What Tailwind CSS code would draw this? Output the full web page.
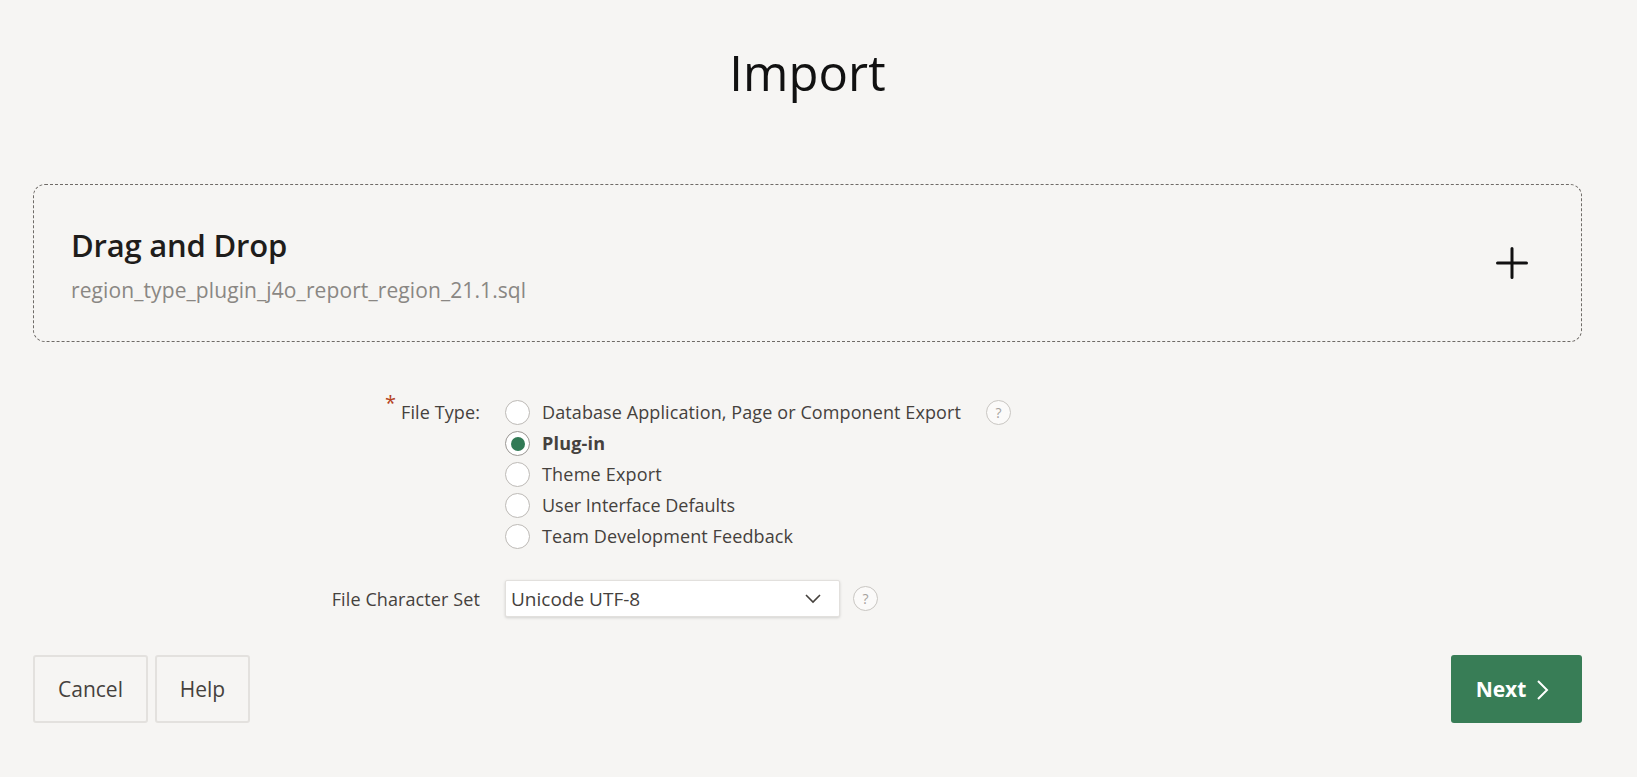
<!DOCTYPE html>
<html lang="en">
<head>
    <meta charset="UTF-8">
    <meta name="viewport" content="width=device-width, initial-scale=1.0">
    <title>Import</title>
    <script src="https://cdn.jsdelivr.net/npm/@tailwindcss/browser@4"></script>
</head>
<body class="h-screen overflow-hidden bg-[#f6f5f3] font-['Open_Sans',sans-serif] text-[#45413d]">

    <div class="w-[1549px] ml-[33px]">
        <h1 class="h-[184px] pt-[38px] text-center text-[49px] leading-[68px] font-medium text-[#111] tracking-[0.1px]">Import</h1>

        <!-- Drop zone -->
        <div class="h-[158px] flex items-center justify-between pl-[37px] pr-[53px] border border-dashed border-[#6f6b67] rounded-[12px]">
            <div class="pt-[2px]">
                <h2 class="text-[31px] leading-[40px] font-semibold text-[#1f1d1b] -tracking-[0.2px]">Drag and Drop</h2>
                <p class="mt-[11px] text-[21px] leading-[28px] text-[#8a8783] tracking-[0.1px]">region_type_plugin_j4o_report_region_21.1.sql</p>
            </div>
            <svg class="w-[32px] h-[32px]" viewBox="0 0 32 32" fill="none" stroke="#111" stroke-width="3" stroke-linecap="round"><path d="M16 1.5v29M1.5 16h29"/></svg>
        </div>

        <!-- Form -->
        <div class="mt-[55px] grid grid-cols-[447px_1fr] gap-x-[25px]">
            <div class="h-[31px] flex justify-end items-center text-[18px] tracking-[0.1px]">
                <span class="text-[#b5421c] text-[20px] leading-none mb-[20px] mr-[5px]">*</span>File Type:
            </div>
            <div class="flex flex-col">
                <label class="h-[31px] flex items-center">
                    <span class="w-[25px] h-[25px] rounded-full bg-white border border-[#bdbab6]"></span>
                    <span class="ml-[12px] w-[438px] text-[18px] tracking-[0.1px]">Database Application, Page or Component Export</span>
                    <span class="w-[25px] h-[25px] ml-[6px] flex items-center justify-center rounded-full bg-white/50 border border-[#c9c6c2] text-[14px] text-[#a5a29e]">?</span>
                </label>
                <label class="h-[31px] flex items-center">
                    <span class="w-[25px] h-[25px] flex items-center justify-center rounded-full bg-white border border-[#9a9793]"><span class="w-[14px] h-[14px] rounded-full bg-[#317a55]"></span></span>
                    <span class="ml-[12px] text-[18px] font-bold tracking-[0.2px]">Plug-in</span>
                </label>
                <label class="h-[31px] flex items-center">
                    <span class="w-[25px] h-[25px] rounded-full bg-white border border-[#bdbab6]"></span>
                    <span class="ml-[12px] text-[18px] tracking-[0.2px]">Theme Export</span>
                </label>
                <label class="h-[31px] flex items-center">
                    <span class="w-[25px] h-[25px] rounded-full bg-white border border-[#bdbab6]"></span>
                    <span class="ml-[12px] text-[18px]">User Interface Defaults</span>
                </label>
                <label class="h-[31px] flex items-center">
                    <span class="w-[25px] h-[25px] rounded-full bg-white border border-[#bdbab6]"></span>
                    <span class="ml-[12px] text-[18px] tracking-[0.1px]">Team Development Feedback</span>
                </label>
            </div>

            <div class="mt-[28px] h-[37px] pt-[1px] flex justify-end items-center text-[18px] tracking-[0.1px]">File Character Set</div>
            <div class="mt-[28px] flex items-center">
                <div class="w-[335px] h-[37px] pt-[1px] flex items-center justify-between pl-[5px] pr-[17px] bg-white border border-[#e2e0dd] rounded-[2px] shadow-[0_1px_3px_rgba(0,0,0,0.15)] text-[19px]">
                    Unicode UTF-8
                    <svg class="w-[18px] h-[10px]" viewBox="0 0 18 10" fill="none" stroke="#45413d" stroke-width="1.6"><path d="M2 1l7 7 7-7"/></svg>
                </div>
                <span class="w-[25px] h-[25px] ml-[13px] flex items-center justify-center rounded-full bg-white/50 border border-[#c9c6c2] text-[14px] text-[#a5a29e]">?</span>
            </div>
        </div>

        <!-- Buttons -->
        <div class="mt-[38px] flex justify-between">
            <div class="flex gap-[7px]">
                <button class="w-[115px] h-[68px] pt-[1px] border-2 border-[#e3e1de] rounded-[3px] text-[21px] text-[#45413d]">Cancel</button>
                <button class="w-[95px] h-[68px] pt-[1px] border-2 border-[#e3e1de] rounded-[3px] text-[21px] text-[#45413d]">Help</button>
            </div>
            <button class="w-[131px] h-[68px] pt-[1px] pr-[8px] flex items-center justify-center gap-[10px] bg-[#387d56] rounded-[3px] text-[21px] font-bold text-white">
                Next
                <svg class="w-[13px] h-[20px]" viewBox="0 0 13 20" fill="none" stroke="#fff" stroke-width="2"><path d="M2 1l9 9-9 9"/></svg>
            </button>
        </div>
    </div>

</body>
</html>
